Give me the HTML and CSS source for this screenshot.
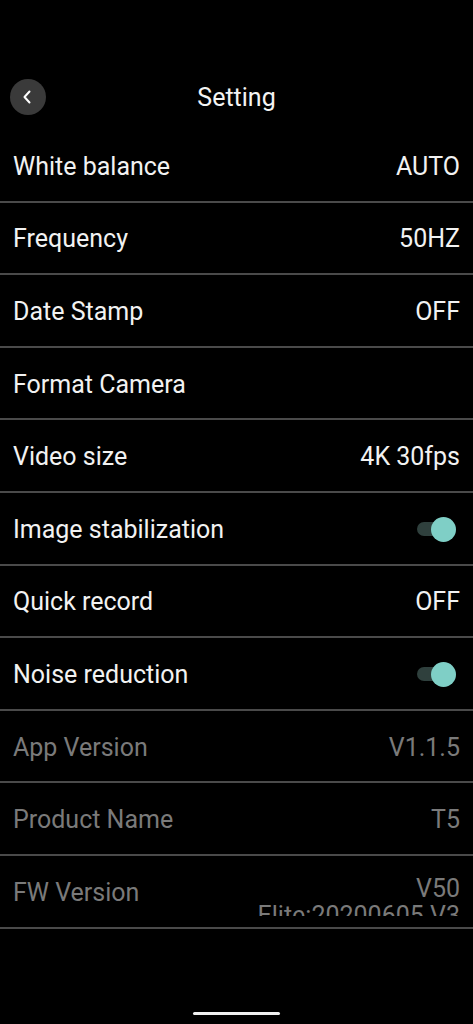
FILE: index.html
```html
<!DOCTYPE html>
<html>
<head>
<meta charset="utf-8">
<link rel="stylesheet" href="styles.css">
</head>
<body>
<div class="screen">
  <header class="header">
    <div class="back">
      <svg width="12" height="16" viewBox="0 0 12 16"><path d="M8.5 2.5 L3.5 8 L8.5 13.5" fill="none" stroke="#fff" stroke-width="2" stroke-linecap="round" stroke-linejoin="round"/></svg>
    </div>
    <div class="title">Setting</div>
    <div class="spacer"></div>
  </header>
  <div class="list">
    <div class="row"><span class="label">White balance</span><span class="value">AUTO</span></div>
    <div class="row"><span class="label">Frequency</span><span class="value">50HZ</span></div>
    <div class="row"><span class="label">Date Stamp</span><span class="value">OFF</span></div>
    <div class="row"><span class="label">Format Camera</span></div>
    <div class="row"><span class="label">Video size</span><span class="value">4K 30fps</span></div>
    <div class="row"><span class="label">Image stabilization</span><span class="toggle"><span class="track"></span><span class="thumb"></span></span></div>
    <div class="row"><span class="label">Quick record</span><span class="value">OFF</span></div>
    <div class="row"><span class="label">Noise reduction</span><span class="toggle"><span class="track"></span><span class="thumb"></span></span></div>
    <div class="row dim"><span class="label">App Version</span><span class="value">V1.1.5</span></div>
    <div class="row dim"><span class="label">Product Name</span><span class="value">T5</span></div>
    <div class="row dim"><span class="label">FW Version</span><span class="value multi">V50<br>Elite:20200605 V3</span></div>
  </div>
  <div class="fill"></div>
  <div class="home"></div>
</div>
</body>
</html>
```
FILE: styles.css
```css
html, body {
  margin: 0;
  padding: 0;
  background: #000;
}
body {
  font-family: Roboto, "Noto Sans", sans-serif;
  color: #f2f2f2;
}
.screen {
  width: 473px;
  height: 1024px;
  display: flex;
  flex-direction: column;
  overflow: hidden;
}
.header {
  height: 130px;
  display: flex;
  align-items: center;
  padding: 64px 10px 0;
  box-sizing: border-box;
}
.back {
  width: 36px;
  height: 36px;
  border-radius: 50%;
  background: #3a3a3a;
  display: flex;
  align-items: center;
  justify-content: center;
}
.back svg {
  margin-left: -2px;
}
.title {
  flex: 1;
  text-align: center;
  font-size: 25px;
  color: #f4f4f4;
}
.spacer {
  width: 36px;
}
.list {
  display: flex;
  flex-direction: column;
}
.row {
  height: 72.6px;
  box-sizing: border-box;
  border-bottom: 2px solid #4a4a4a;
  display: flex;
  align-items: center;
  justify-content: space-between;
  padding: 2px 13px 0;
  font-size: 25px;
}
.row.dim {
  color: #7a7a7a;
}
.value {
  text-align: right;
}
.value.multi {
  align-self: flex-start;
  margin-top: 17px;
  height: 41px;
  line-height: 27px;
  overflow: hidden;
}
.toggle {
  position: relative;
  width: 39px;
  height: 25px;
  margin-right: 4px;
  display: flex;
  align-items: center;
}
.track {
  width: 32px;
  height: 14px;
  border-radius: 7px;
  background: #2f403d;
}
.thumb {
  position: absolute;
  right: 0;
  top: 0;
  width: 25px;
  height: 25px;
  border-radius: 50%;
  background: #7fcfc6;
}
.fill {
  flex: 1;
}
.home {
  width: 87px;
  height: 3px;
  border-radius: 2px;
  background: #f0f0f0;
  align-self: center;
  margin-bottom: 9px;
}
```
